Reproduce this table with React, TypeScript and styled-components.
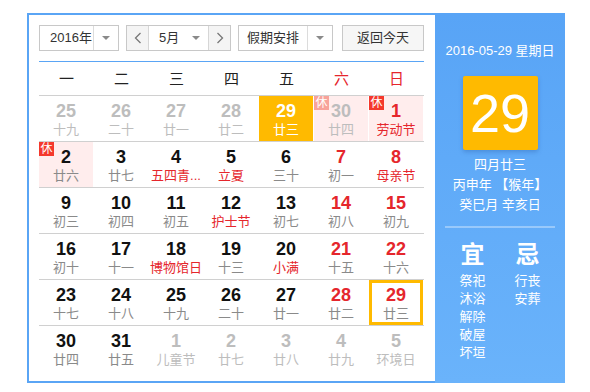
import React from 'react'
import styled, { createGlobalStyle } from 'styled-components'

const FONT = `"Liberation Sans", "Noto Sans CJK SC", sans-serif`
const BLUE = '#5aa5f5'
const YELLOW = '#ffba00'
const RED = '#e5262c'

const GlobalStyle = createGlobalStyle`
  body {
    margin: 0;
    background: #fff;
    font-family: ${FONT};
  }
`

const Page = styled.div`
  padding: 13px 0 0 27px;
`

const Wrapper = styled.div`
  display: flex;
  width: 538px;
`

const Main = styled.div`
  width: 385px;
  padding: 10px 11px 10px 10px;
  border: 2px solid ${BLUE};
  border-right: none;
`

const Toolbar = styled.div`
  display: flex;
  height: 26px;
  margin-bottom: 10px;
`

const SelectBox = styled.div<{ $w: number; $gap: number }>`
  display: flex;
  box-sizing: border-box;
  width: ${(p) => p.$w}px;
  height: 26px;
  margin-right: ${(p) => p.$gap}px;
  border: 1px solid #c8c8c8;
  background: #fff;
  font-size: 13px;
  color: #333;
  white-space: nowrap;
`

const SelectText = styled.div<{ $center?: boolean; $pad?: number }>`
  flex: 1;
  line-height: 24px;
  padding-left: ${(p) => (p.$center ? 0 : p.$pad ?? 10)}px;
  text-align: ${(p) => (p.$center ? 'center' : 'left')};
  white-space: nowrap;
`

const ArrowCell = styled.div<{ $line?: boolean }>`
  width: 24px;
  flex: none;
  display: flex;
  align-items: center;
  justify-content: center;
  border-left: ${(p) => (p.$line ? '1px solid #dcdcdc' : 'none')};
  &::after {
    content: '';
    border-left: 4px solid transparent;
    border-right: 4px solid transparent;
    border-top: 4px solid #8a8a8a;
  }
`

const NavButton = styled.div<{ $side: 'left' | 'right' }>`
  width: 21px;
  flex: none;
  display: flex;
  align-items: center;
  justify-content: center;
  background: #f4f4f4;
  ${(p) => (p.$side === 'left' ? 'border-right' : 'border-left')}: 1px solid #d6d6d6;
`

const MonthPart = styled.div`
  flex: 1;
  display: flex;
`

const TodayButton = styled.div`
  box-sizing: border-box;
  width: 82px;
  height: 26px;
  border: 1px solid #c8c8c8;
  background: #f6f6f6;
  font-size: 13px;
  color: #333;
  text-align: center;
  line-height: 24px;
  white-space: nowrap;
`

const BlueLine = styled.div`
  height: 1px;
  background: ${BLUE};
`

const WeekRow = styled.div`
  display: grid;
  grid-template-columns: repeat(7, 55px);
  height: 33px;
  border-bottom: 1px solid #d0d0d0;
`

const WeekName = styled.div<{ $red?: boolean }>`
  text-align: center;
  line-height: 33px;
  font-size: 15px;
  color: ${(p) => (p.$red ? RED : '#222')};
`

const WeekLine = styled.div<{ $last?: boolean }>`
  display: grid;
  grid-template-columns: repeat(7, 55px);
  height: 45px;
  border-bottom: ${(p) => (p.$last ? 'none' : '1px solid #d0d0d0')};
`

type Tone = 'normal' | 'weekend' | 'other'

const Cell = styled.div<{ $bg: string; $today?: boolean }>`
  position: relative;
  box-sizing: border-box;
  display: flex;
  flex-direction: column;
  align-items: center;
  padding-top: 5px;
  background: ${(p) => p.$bg};
  margin-right: 1px;
  ${(p) => (p.$today ? `box-shadow: inset 0 0 0 3px ${YELLOW};` : '')}
`

const DayNum = styled.div<{ $color: string }>`
  font-size: 18px;
  font-weight: bold;
  line-height: 20px;
  color: ${(p) => p.$color};
`

const Lunar = styled.div<{ $color: string }>`
  font-size: 13px;
  line-height: 18px;
  color: ${(p) => p.$color};
  white-space: nowrap;
`

const RestBadge = styled.span<{ $faded?: boolean }>`
  position: absolute;
  left: 0;
  top: 0;
  width: 15px;
  height: 14px;
  background: ${(p) => (p.$faded ? '#f8a39b' : '#f4382c')};
  color: #fff;
  font-size: 12px;
  line-height: 14px;
  text-align: center;
`

const Side = styled.div`
  width: 130px;
  background: linear-gradient(180deg, #58a4f6 0%, #6ab3fb 100%);
  color: #fff;
  display: flex;
  flex-direction: column;
  align-items: center;
  padding-top: 29px;
`

const SideDate = styled.div`
  font-size: 13px;
  line-height: 18px;
`

const BigDay = styled.div`
  width: 75px;
  height: 74px;
  margin-top: 16px;
  background: ${YELLOW};
  border-radius: 2px;
  box-shadow: 0 2px 4px rgba(40, 90, 160, 0.35);
  font-size: 54px;
  line-height: 74px;
  text-align: center;
`

const SideLunar = styled.div`
  margin-top: 5px;
  font-size: 13px;
  line-height: 20px;
  text-align: center;
`

const Divider = styled.div`
  width: 110px;
  height: 2px;
  margin-top: 11px;
  background: rgba(255, 255, 255, 0.35);
`

const Advice = styled.div`
  display: flex;
  gap: 31px;
  margin-top: 13px;
`

const AdviceCol = styled.div`
  display: flex;
  flex-direction: column;
  align-items: center;
  width: 24px;
`

const AdviceTitle = styled.div`
  font-size: 24px;
  font-weight: bold;
  line-height: 28px;
  margin-bottom: 3px;
`

const AdviceItem = styled.div`
  font-size: 13px;
  line-height: 18px;
  white-space: nowrap;
`

const Chevron = ({ dir }: { dir: 'left' | 'right' }) => (
  <svg width="8" height="12" viewBox="0 0 8 12">
    <polyline
      points={dir === 'left' ? '6.5,1 1.5,6 6.5,11' : '1.5,1 6.5,6 1.5,11'}
      fill="none"
      stroke="#777"
      strokeWidth="1.3"
    />
  </svg>
)

type Day = {
  n: number
  lunar: string
  tone?: Tone
  fest?: boolean
  rest?: boolean
  selected?: boolean
  today?: boolean
}

const weeks: Day[][] = [
  [
    { n: 25, lunar: '十九', tone: 'other' },
    { n: 26, lunar: '二十', tone: 'other' },
    { n: 27, lunar: '廿一', tone: 'other' },
    { n: 28, lunar: '廿二', tone: 'other' },
    { n: 29, lunar: '廿三', tone: 'other', selected: true },
    { n: 30, lunar: '廿四', tone: 'other', rest: true },
    { n: 1, lunar: '劳动节', tone: 'weekend', fest: true, rest: true },
  ],
  [
    { n: 2, lunar: '廿六', rest: true },
    { n: 3, lunar: '廿七' },
    { n: 4, lunar: '五四青...', fest: true },
    { n: 5, lunar: '立夏', fest: true },
    { n: 6, lunar: '三十' },
    { n: 7, lunar: '初一', tone: 'weekend' },
    { n: 8, lunar: '母亲节', tone: 'weekend', fest: true },
  ],
  [
    { n: 9, lunar: '初三' },
    { n: 10, lunar: '初四' },
    { n: 11, lunar: '初五' },
    { n: 12, lunar: '护士节', fest: true },
    { n: 13, lunar: '初七' },
    { n: 14, lunar: '初八', tone: 'weekend' },
    { n: 15, lunar: '初九', tone: 'weekend' },
  ],
  [
    { n: 16, lunar: '初十' },
    { n: 17, lunar: '十一' },
    { n: 18, lunar: '博物馆日', fest: true },
    { n: 19, lunar: '十三' },
    { n: 20, lunar: '小满', fest: true },
    { n: 21, lunar: '十五', tone: 'weekend' },
    { n: 22, lunar: '十六', tone: 'weekend' },
  ],
  [
    { n: 23, lunar: '十七' },
    { n: 24, lunar: '十八' },
    { n: 25, lunar: '十九' },
    { n: 26, lunar: '二十' },
    { n: 27, lunar: '廿一' },
    { n: 28, lunar: '廿二', tone: 'weekend' },
    { n: 29, lunar: '廿三', tone: 'weekend', today: true },
  ],
  [
    { n: 30, lunar: '廿四' },
    { n: 31, lunar: '廿五' },
    { n: 1, lunar: '儿童节', tone: 'other' },
    { n: 2, lunar: '廿七', tone: 'other' },
    { n: 3, lunar: '廿八', tone: 'other' },
    { n: 4, lunar: '廿九', tone: 'other' },
    { n: 5, lunar: '环境日', tone: 'other' },
  ],
]

const weekNames = ['一', '二', '三', '四', '五', '六', '日']

const DayCell = ({ d }: { d: Day }) => {
  const tone = d.tone || 'normal'
  let numColor = tone === 'other' ? '#bdbdbd' : tone === 'weekend' ? RED : '#111'
  let lunarColor = tone === 'other' ? '#bdbdbd' : d.fest ? RED : '#8a8a8a'
  let bg = d.rest ? '#ffeded' : 'transparent'
  if (d.selected) {
    numColor = '#fff'
    lunarColor = '#fff'
    bg = YELLOW
  }
  return (
    <Cell $bg={bg} $today={d.today}>
      {d.rest && <RestBadge $faded={tone === 'other'}>休</RestBadge>}
      <DayNum $color={numColor}>{d.n}</DayNum>
      <Lunar $color={lunarColor}>{d.lunar}</Lunar>
    </Cell>
  )
}

const App = () => {
  return (
    <Page>
      <GlobalStyle />
      <Wrapper>
        <Main>
          <Toolbar>
            <SelectBox $w={80} $gap={7}>
              <SelectText>2016年</SelectText>
              <ArrowCell $line />
            </SelectBox>
            <SelectBox $w={105} $gap={7}>
              <NavButton $side="left">
                <Chevron dir="left" />
              </NavButton>
              <MonthPart>
                <SelectText $pad={10}>5月</SelectText>
                <ArrowCell />
              </MonthPart>
              <NavButton $side="right">
                <Chevron dir="right" />
              </NavButton>
            </SelectBox>
            <SelectBox $w={95} $gap={9}>
              <SelectText $center>假期安排</SelectText>
              <ArrowCell $line />
            </SelectBox>
            <TodayButton>返回今天</TodayButton>
          </Toolbar>
          <BlueLine />
          <WeekRow>
            {weekNames.map((w, i) => (
              <WeekName key={w} $red={i >= 5}>
                {w}
              </WeekName>
            ))}
          </WeekRow>
          {weeks.map((week, i) => (
            <WeekLine key={i} $last={i === weeks.length - 1}>
              {week.map((d, j) => (
                <DayCell key={j} d={d} />
              ))}
            </WeekLine>
          ))}
        </Main>
        <Side>
          <SideDate>2016-05-29 星期日</SideDate>
          <BigDay>29</BigDay>
          <SideLunar>
            四月廿三
            <br />
            丙申年 【猴年】
            <br />
            癸巳月 辛亥日
          </SideLunar>
          <Divider />
          <Advice>
            <AdviceCol>
              <AdviceTitle>宜</AdviceTitle>
              <AdviceItem>祭祀</AdviceItem>
              <AdviceItem>沐浴</AdviceItem>
              <AdviceItem>解除</AdviceItem>
              <AdviceItem>破屋</AdviceItem>
              <AdviceItem>坏垣</AdviceItem>
            </AdviceCol>
            <AdviceCol>
              <AdviceTitle>忌</AdviceTitle>
              <AdviceItem>行丧</AdviceItem>
              <AdviceItem>安葬</AdviceItem>
            </AdviceCol>
          </Advice>
        </Side>
      </Wrapper>
    </Page>
  )
}

export default App
